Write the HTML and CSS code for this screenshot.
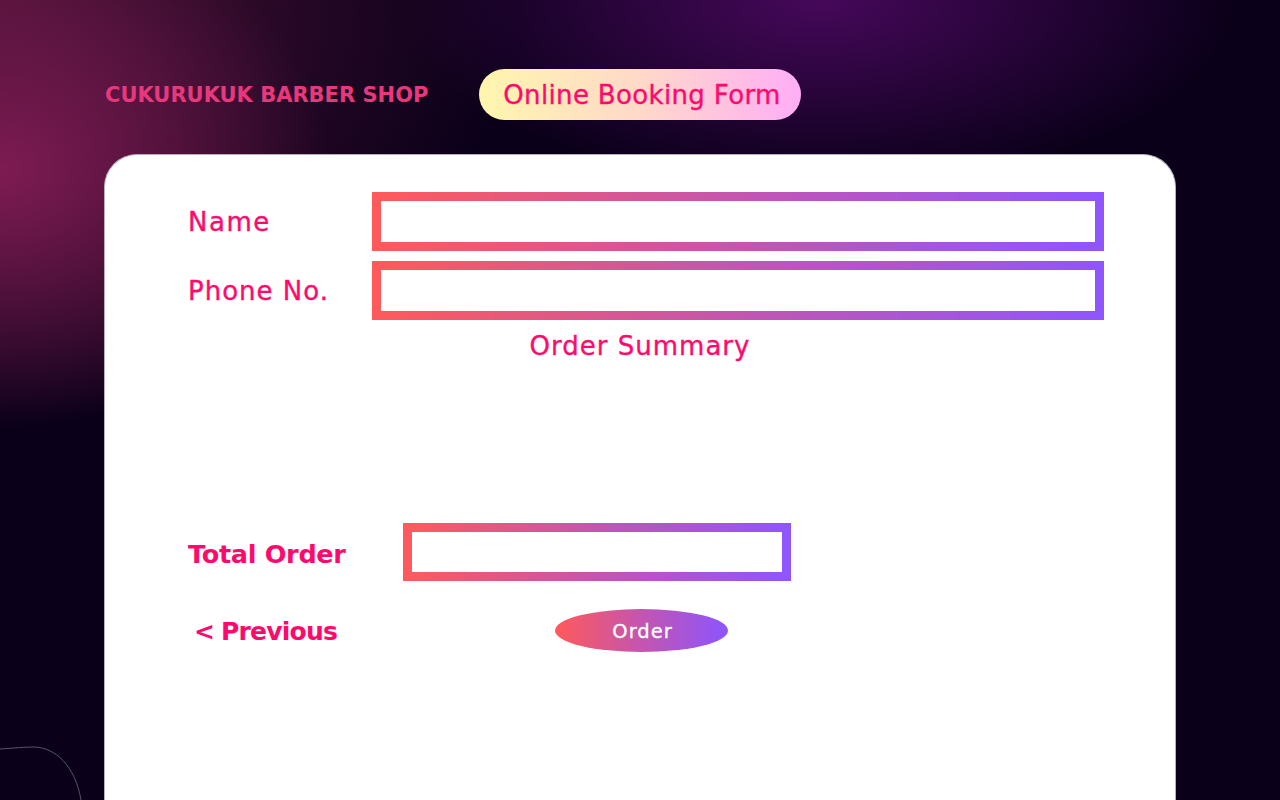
FILE: index.html
```html
<!DOCTYPE html>
<html lang="en">
<head>
<meta charset="utf-8">
<title>Cukurukuk Barber Shop - Online Booking Form</title>
<link rel="stylesheet" href="styles.css">
</head>
<body>
<svg class="deco-curve" width="120" height="80" viewBox="0 720 120 80" aria-hidden="true">
  <path d="M0 749 C 15 748, 25 747, 35 747 C 55 748, 75 765, 81 800" fill="none" stroke="#5e5070" stroke-width="1"/>
</svg>
<header class="header">
  <div class="brand">CUKURUKUK BARBER SHOP</div>
  <div class="pill">Online Booking Form</div>
</header>
<main class="card">
  <div class="row">
    <label class="label name-label">Name</label>
    <div class="gbox"></div>
  </div>
  <div class="row">
    <label class="label phone-label">Phone No.</label>
    <div class="gbox"></div>
  </div>
  <div class="summary-title">Order Summary</div>
  <div class="summary-body"></div>
  <div class="row total-row">
    <label class="label bold">Total Order</label>
    <div class="gbox"></div>
  </div>
  <div class="actions">
    <a class="prev">&lt; Previous</a>
    <button class="order-btn">Order</button>
  </div>
</main>
</body>
</html>
```

FILE: styles.css
```css
html, body {
  margin: 0;
  padding: 0;
}

body {
  width: 1280px;
  height: 800px;
  overflow: hidden;
  position: relative;
  font-family: "DejaVu Sans", "Open Sans", sans-serif;
  background-color: #0a0019;
  background-image:
    radial-gradient(ellipse 330px 260px at 0px 170px, rgba(130, 28, 85, 0.95), rgba(130, 28, 85, 0) 100%),
    radial-gradient(ellipse 420px 190px at 820px 0px, rgba(70, 8, 90, 1), rgba(70, 8, 90, 0) 100%),
    radial-gradient(ellipse 520px 420px at 0px 0px, rgba(90, 22, 60, 0.8), rgba(90, 22, 60, 0) 100%);
}

.deco-curve {
  position: absolute;
  left: 0;
  bottom: 0;
}

.header {
  display: grid;
  grid-template-columns: 374px auto;
  align-items: center;
  padding: 70px 0 0 105px;
}

.brand {
  font-size: 21px;
  font-weight: 700;
  color: #e8387d;
  white-space: nowrap;
}

.pill {
  width: 322px;
  height: 51px;
  margin-top: -1px;
  padding-left: 4px;
  box-sizing: border-box;
  border-radius: 26px;
  background: linear-gradient(90deg, #fff6ae 0%, #ffd9c9 50%, #ffaef6 100%);
  display: flex;
  align-items: center;
  justify-content: center;
  font-size: 26px;
  letter-spacing: 0.35px;
  color: #ff0a6c;
  -webkit-text-stroke: 0.35px #ff0a6c;
}

.card {
  display: block;
  box-sizing: border-box;
  width: 1072px;
  height: 700px;
  margin: 34px 0 0 104px;
  padding: 37px 71px 0 83px;
  background: #ffffff;
  border: 1px solid #b5aebf;
  border-bottom: none;
  border-radius: 33px 33px 0 0;
}

.row {
  display: grid;
  grid-template-columns: 184px 1fr;
  align-items: center;
  height: 59px;
  margin-bottom: 10px;
}

.label {
  font-size: 26px;
  color: #ff0a6c;
  padding-top: 1px;
  -webkit-text-stroke: 0.35px #ff0a6c;
}

.name-label {
  letter-spacing: 1.5px;
}

.phone-label {
  letter-spacing: 1px;
}

.label.bold {
  font-size: 25.5px;
  font-weight: 700;
  letter-spacing: -0.3px;
  padding-top: 3px;
  -webkit-text-stroke: 0;
}

.gbox {
  height: 59px;
  box-sizing: border-box;
  border: 9.5px solid transparent;
  background:
    linear-gradient(#ffffff, #ffffff) padding-box,
    linear-gradient(90deg, #ff5a5a 0%, #c455b0 50%, #8f55ff 100%) border-box;
}

.summary-title {
  text-align: center;
  font-size: 26px;
  letter-spacing: 1px;
  color: #ff0a6c;
  -webkit-text-stroke: 0.35px #ff0a6c;
  line-height: 32px;
  margin-top: 2px;
  margin-left: -12px;
}

.summary-body {
  height: 161px;
}

.total-row {
  grid-template-columns: 215px 388px;
  height: 58px;
  margin-bottom: 0;
}

.total-row .gbox {
  height: 58px;
}

.actions {
  display: grid;
  grid-template-columns: 367px 173px;
  align-items: center;
  margin-top: 28px;
  height: 43px;
}

.prev {
  padding-left: 6px;
  padding-top: 2px;
  font-size: 25px;
  font-weight: 700;
  letter-spacing: -0.8px;
  word-spacing: -1px;
  color: #ff0a6c;
  text-decoration: none;
}

.order-btn {
  width: 173px;
  height: 43px;
  border: none;
  border-radius: 50%;
  background: linear-gradient(90deg, #ff5a5a 0%, #c455b0 50%, #8b55ff 100%);
  color: #ffffff;
  -webkit-text-stroke: 0.3px #ffffff;
  font-family: "DejaVu Sans", "Open Sans", sans-serif;
  font-size: 19.5px;
  letter-spacing: 1px;
  padding: 1px 0 0 2px;
}
```
